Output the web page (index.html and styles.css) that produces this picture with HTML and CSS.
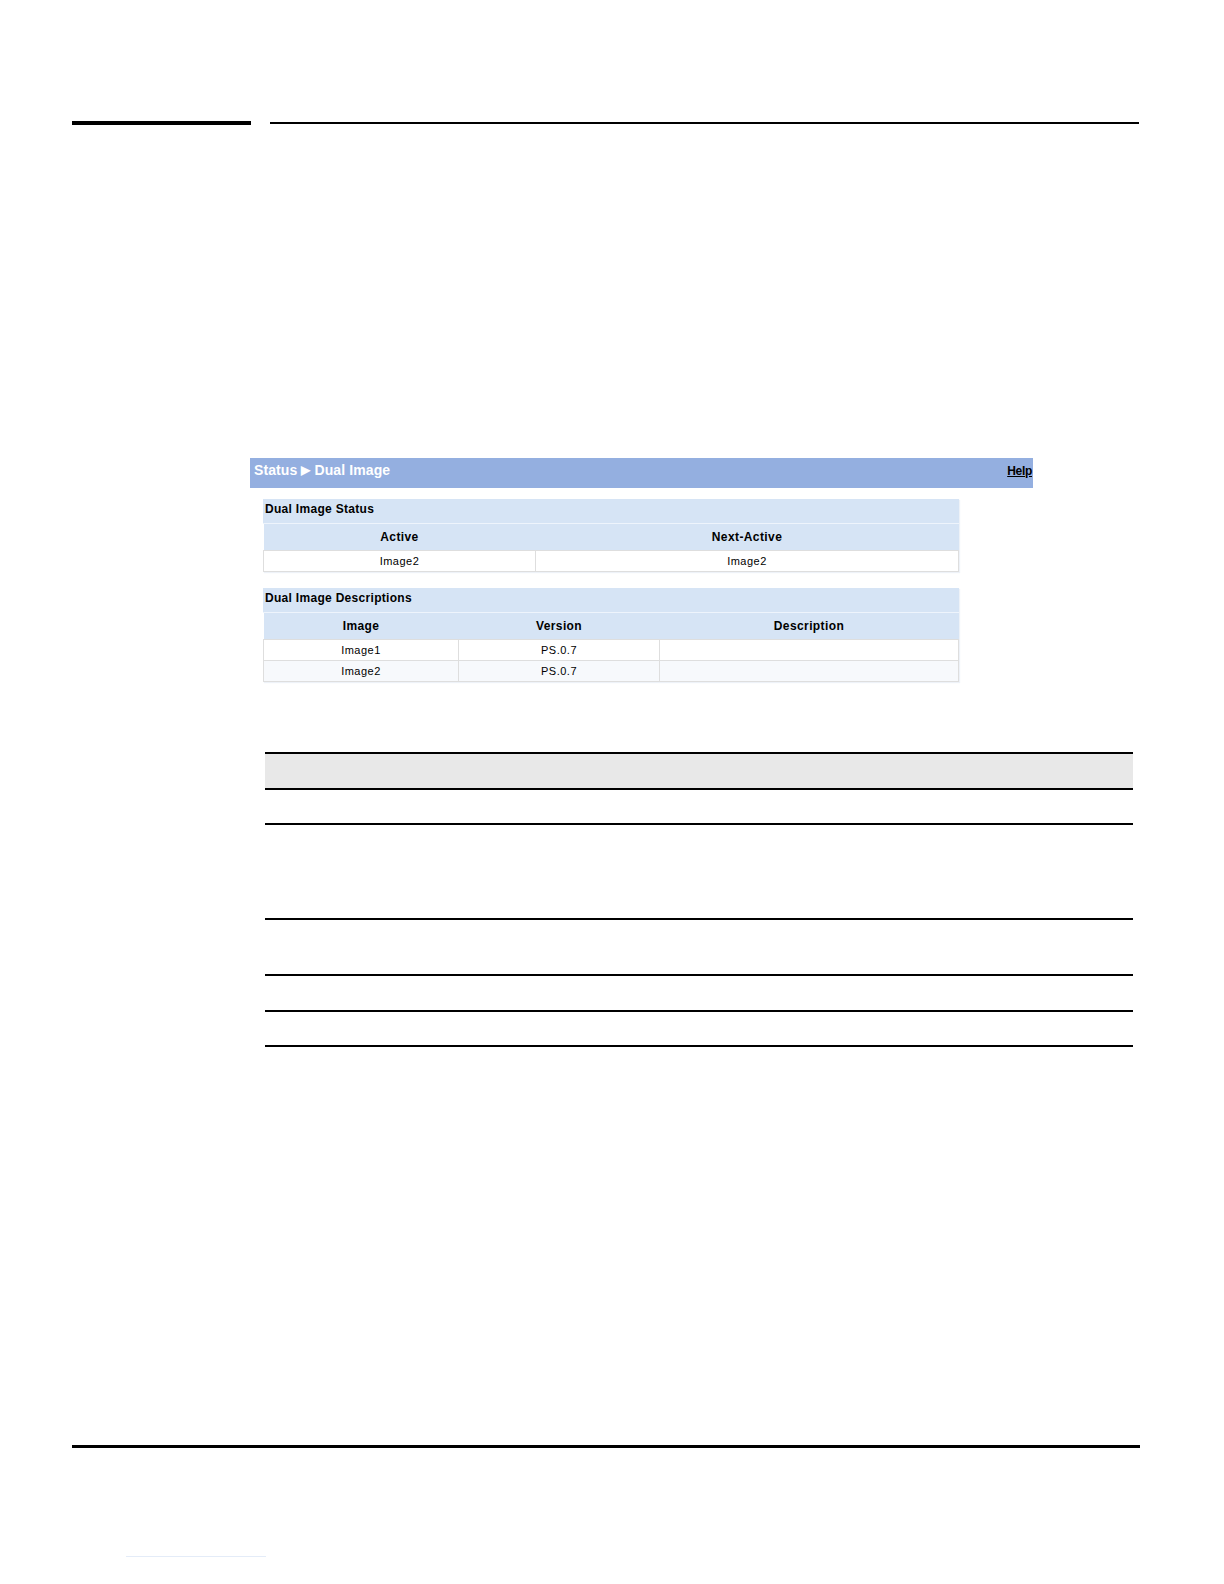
FILE: index.html
```html
<!DOCTYPE html>
<html>
<head>
<meta charset="utf-8">
<link rel="stylesheet" href="styles.css">
</head>
<body>
<div class="page">
  <div class="top-rule">
    <div class="rule-thick"></div>
    <div class="rule-thin"></div>
  </div>

  <div class="shot">
    <div class="bar">
      <span class="bar-title">Status <span class="tri">&#9654;</span> Dual Image</span>
      <a class="help">Help</a>
    </div>

    <div class="panel panel-status">
      <div class="panel-title">Dual Image Status</div>
      <table class="grid">
        <colgroup><col class="c-active"><col></colgroup>
        <tr class="head"><th>Active</th><th>Next-Active</th></tr>
        <tr class="row"><td>Image2</td><td>Image2</td></tr>
      </table>
    </div>

    <div class="panel panel-desc">
      <div class="panel-title">Dual Image Descriptions</div>
      <table class="grid">
        <colgroup><col class="c-image"><col class="c-version"><col></colgroup>
        <tr class="head"><th>Image</th><th>Version</th><th>Description</th></tr>
        <tr class="row"><td>Image1</td><td>PS.0.7</td><td></td></tr>
        <tr class="row alt"><td>Image2</td><td>PS.0.7</td><td></td></tr>
      </table>
    </div>
  </div>

  <div class="doc-table">
    <div class="dt-head"></div>
    <div class="dt-row r1"></div>
    <div class="dt-row r2"></div>
    <div class="dt-row r3"></div>
    <div class="dt-row r4"></div>
    <div class="dt-row r5"></div>
  </div>

  <div class="footer-rule"></div>
  <div class="footer-link"></div>
</div>
</body>
</html>
```

FILE: styles.css
```css
html, body {
  margin: 0;
  padding: 0;
  background: #ffffff;
}

body {
  font-family: "Liberation Sans", Arial, sans-serif;
  color: #000;
}

.page {
  padding-top: 121px;
  padding-bottom: 10px;
}

.top-rule {
  display: flex;
  align-items: center;
  margin-left: 72px;
  height: 4px;
}

.rule-thick {
  width: 179px;
  height: 4px;
  background: #000;
}

.rule-thin {
  width: 869px;
  height: 2px;
  margin-left: 19px;
  background: #000;
}

.shot {
  margin-left: 250px;
  margin-top: 333px;
  width: 783px;
}

.bar {
  height: 30px;
  background: #94afe0;
  display: flex;
  align-items: center;
  justify-content: space-between;
  padding: 0 1px 6px 4px;
  box-sizing: border-box;
}

.bar-title {
  color: #ffffff;
  font-weight: bold;
  font-size: 14px;
  letter-spacing: 0.1px;
}

.tri {
  font-size: 12px;
  position: relative;
  top: -1px;
}

.help {
  color: #000;
  font-weight: bold;
  font-size: 12px;
  text-decoration: underline;
  letter-spacing: -0.3px;
  margin-top: 1px;
}

.panel {
  margin-left: 13px;
  width: 696px;
  box-shadow: 1px 1px 1px #eef2f8;
}

.panel-status {
  margin-top: 11px;
}

.panel-desc {
  margin-top: 16px;
}

.panel-title {
  height: 24px;
  background: #d6e4f5;
  font-size: 12px;
  font-weight: bold;
  padding-left: 2px;
  line-height: 20px;
  border-bottom: 1px solid #eef4fc;
  letter-spacing: 0.3px;
}

.grid {
  width: 100%;
  border-collapse: collapse;
  table-layout: fixed;
}

.c-active { width: 272px; }
.c-image { width: 195px; }
.c-version { width: 201px; }

.grid th {
  background: #d6e4f5;
  height: 26px;
  font-size: 12px;
  font-weight: bold;
  padding: 0;
  text-align: center;
  letter-spacing: 0.4px;
}

.grid td {
  height: 20px;
  font-size: 11px;
  text-align: center;
  padding: 0;
  border: 1px solid #dedede;
  background: #ffffff;
  letter-spacing: 0.5px;
}

.grid tr.alt td {
  background: #f7f9fc;
}

.doc-table {
  margin-left: 265px;
  margin-top: 70px;
  width: 868px;
  border-top: 2px solid #000;
}

.dt-head {
  height: 34px;
  background: #e8e8e8;
  border-bottom: 2px solid #000;
}

.dt-row {
  border-bottom: 2px solid #000;
}

.r1 { height: 33px; }
.r2 { height: 93px; }
.r3 { height: 54px; }
.r4 { height: 34px; }
.r5 { height: 33px; }

.footer-rule {
  margin-left: 72px;
  margin-top: 398px;
  width: 1068px;
  height: 2.5px;
  background: #000;
}

.footer-link {
  margin-left: 126px;
  margin-top: 108px;
  width: 140px;
  height: 1px;
  background: #e4ecf8;
}
```
